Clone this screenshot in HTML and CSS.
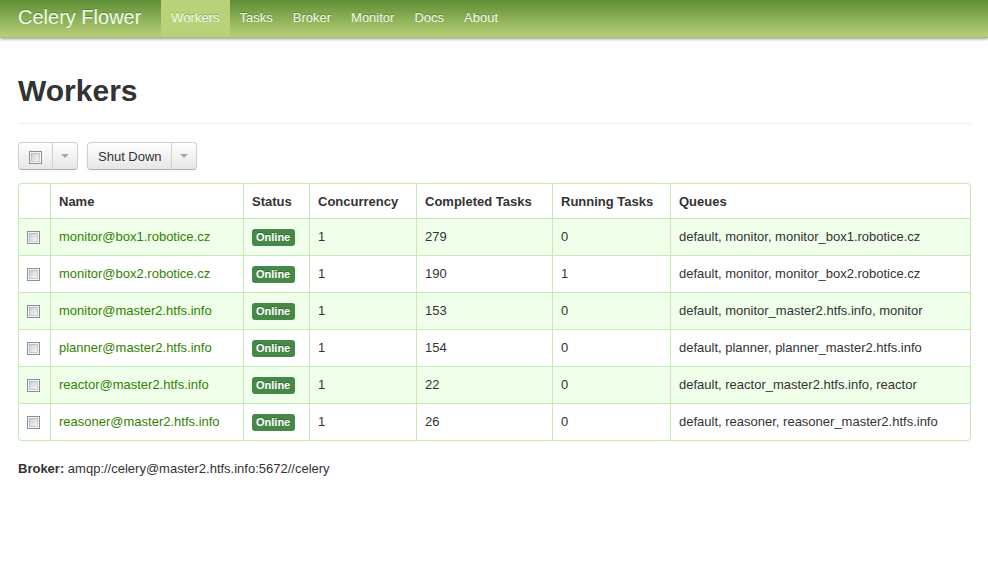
FILE: index.html
```html
<!DOCTYPE html>
<html lang="en">
<head>
<meta charset="utf-8">
<title>Celery Flower</title>
<link rel="stylesheet" href="styles.css">
</head>
<body>
<nav class="navbar">
  <a class="brand" href="#">Celery Flower</a>
  <a class="nav-link active" href="#">Workers</a>
  <a class="nav-link" href="#">Tasks</a>
  <a class="nav-link" href="#">Broker</a>
  <a class="nav-link" href="#">Monitor</a>
  <a class="nav-link" href="#">Docs</a>
  <a class="nav-link" href="#">About</a>
</nav>
<main class="container">
  <h1>Workers</h1>
  <div class="toolbar">
    <div class="btn-group">
      <label class="btn btn-check"><input type="checkbox" aria-label="Select all workers"></label>
      <button class="btn btn-caret" type="button" aria-label="Selection options"><span class="caret"></span></button>
    </div>
    <div class="btn-group">
      <button class="btn btn-action" type="button">Shut Down</button>
      <button class="btn btn-caret" type="button" aria-label="More actions"><span class="caret"></span></button>
    </div>
  </div>
  <table class="workers">
    <colgroup>
      <col class="col-check"><col class="col-name"><col class="col-status"><col class="col-concurrency"><col class="col-completed"><col class="col-running"><col>
    </colgroup>
    <thead>
      <tr><th></th><th>Name</th><th>Status</th><th>Concurrency</th><th>Completed Tasks</th><th>Running Tasks</th><th>Queues</th></tr>
    </thead>
    <tbody>
      <tr><td><input type="checkbox" aria-label="Select monitor@box1.robotice.cz"></td><td><a href="#">monitor@box1.robotice.cz</a></td><td><span class="badge">Online</span></td><td>1</td><td>279</td><td>0</td><td>default, monitor, monitor_box1.robotice.cz</td></tr>
      <tr><td><input type="checkbox" aria-label="Select monitor@box2.robotice.cz"></td><td><a href="#">monitor@box2.robotice.cz</a></td><td><span class="badge">Online</span></td><td>1</td><td>190</td><td>1</td><td>default, monitor, monitor_box2.robotice.cz</td></tr>
      <tr><td><input type="checkbox" aria-label="Select monitor@master2.htfs.info"></td><td><a href="#">monitor@master2.htfs.info</a></td><td><span class="badge">Online</span></td><td>1</td><td>153</td><td>0</td><td>default, monitor_master2.htfs.info, monitor</td></tr>
      <tr><td><input type="checkbox" aria-label="Select planner@master2.htfs.info"></td><td><a href="#">planner@master2.htfs.info</a></td><td><span class="badge">Online</span></td><td>1</td><td>154</td><td>0</td><td>default, planner, planner_master2.htfs.info</td></tr>
      <tr><td><input type="checkbox" aria-label="Select reactor@master2.htfs.info"></td><td><a href="#">reactor@master2.htfs.info</a></td><td><span class="badge">Online</span></td><td>1</td><td>22</td><td>0</td><td>default, reactor_master2.htfs.info, reactor</td></tr>
      <tr><td><input type="checkbox" aria-label="Select reasoner@master2.htfs.info"></td><td><a href="#">reasoner@master2.htfs.info</a></td><td><span class="badge">Online</span></td><td>1</td><td>26</td><td>0</td><td>default, reasoner, reasoner_master2.htfs.info</td></tr>
    </tbody>
  </table>
  <p class="broker"><strong>Broker:</strong> amqp://celery@master2.htfs.info:5672//celery</p>
</main>
</body>
</html>
```
FILE: styles.css
```css
* {
  box-sizing: border-box;
}

body {
  margin: 0;
  background: #fff;
  color: #333;
  font: 13px/20px "Liberation Sans", Arial, sans-serif;
}

.navbar {
  display: flex;
  height: 38px;
  padding-left: 18px;
  background: linear-gradient(#5e8f35, #b8d078);
  border-bottom: 1px solid #a3bd66;
  box-shadow: 0 1px 3px rgba(0, 0, 0, 0.4);
}

.navbar a {
  color: #effeeb;
  text-decoration: none;
  text-shadow: 0 -1px 0 rgba(0, 0, 0, 0.25);
}

.brand {
  padding-right: 20px;
  font-size: 20px;
  line-height: 34px;
}

.nav-link {
  padding: 0 10px;
  line-height: 35px;
}

.nav-link.active {
  background: #b8d27a;
}

.container {
  padding: 36px 17px 18px 18px;
}

h1 {
  margin: 0 0 18px;
  padding-bottom: 16px;
  border-bottom: 1px solid #eee;
  font-size: 30px;
  line-height: 33px;
}

.toolbar {
  display: flex;
  gap: 9px;
  margin-bottom: 13px;
}

.btn-group {
  display: flex;
}

.btn {
  height: 28px;
  padding: 0 10px;
  border: 1px solid #d0d0d0;
  border-bottom-color: #b3b3b3;
  border-radius: 4px 0 0 4px;
  background: linear-gradient(#fff, #e6e6e6);
  box-shadow: 0 1px 2px rgba(0, 0, 0, 0.05);
  color: #333;
  font: inherit;
}

.btn-action {
  padding: 1px 9px 0 10px;
}

.btn-check {
  display: flex;
  align-items: center;
  width: 35px;
  padding-top: 2px;
}

.btn-caret {
  display: flex;
  align-items: center;
  width: 26px;
  padding: 0 8px;
  margin-left: -1px;
  border-radius: 0 4px 4px 0;
}

.caret {
  border: 4px solid transparent;
  border-top-color: #a6a6a6;
  border-bottom: 0;
}

input[type="checkbox"] {
  display: block;
  appearance: none;
  width: 13px;
  height: 13px;
  margin: 0;
  padding: 1px;
  border: 1px solid #8e8f8f;
  background:
    linear-gradient(135deg, #c8cdd4, #f8f8f8) content-box,
    #f4f4f4;
  box-shadow: inset 0 0 0 1px #f4f4f4, inset 0 0 0 2px rgba(150, 155, 165, 0.4);
}

.workers {
  width: 100%;
  table-layout: fixed;
  border: 1px solid #c5eab5;
  border-left: 0;
  border-radius: 4px;
  border-collapse: separate;
  border-spacing: 0;
}

.col-check { width: 32px; }
.col-name { width: 193px; }
.col-status { width: 66px; }
.col-concurrency { width: 107px; }
.col-completed { width: 136px; }
.col-running { width: 118px; }

.workers th,
.workers td {
  padding: 8px 8px 6px;
  border-left: 1px solid #c5eab5;
  text-align: left;
  vertical-align: top;
}

.workers th:first-child {
  border-top-left-radius: 4px;
}

.workers tr:last-child td:first-child {
  border-bottom-left-radius: 4px;
}

.workers td {
  height: 37px;
  border-top: 1px solid #c5eab5;
}

.workers td:first-child {
  padding-top: 12px;
}

.workers tbody tr:nth-child(odd) {
  background: #efffea;
}

.workers a {
  color: #328200;
  text-decoration: none;
}

.badge {
  display: block;
  width: 43px;
  margin-top: 2px;
  padding: 1px 4px;
  border-radius: 3px;
  background: #468847;
  color: #fff;
  font-size: 11px;
  font-weight: bold;
  line-height: 15px;
  text-shadow: 0 -1px 0 rgba(0, 0, 0, 0.25);
}

.broker {
  margin: 18px 0 0;
}
```
